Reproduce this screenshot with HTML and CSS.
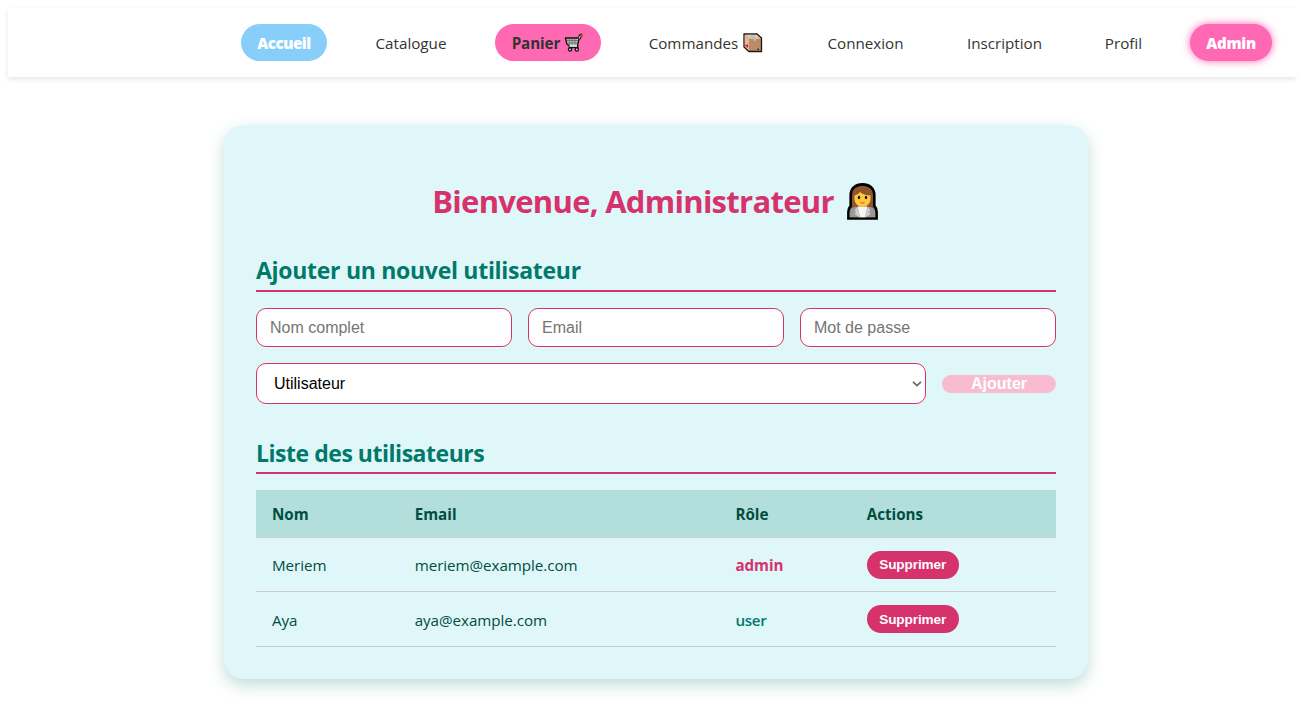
FILE: index.html
```html
<!DOCTYPE html>
<html lang="fr">
<head>
<meta charset="utf-8">
<title>Administration</title>
<link rel="stylesheet" href="styles.css">
</head>
<body>
<nav class="navbar">
  <a class="link home"><span>Accueil</span></a>
  <a class="link catalog"><span>Catalogue</span></a>
  <a class="link cart"><span>Panier</span>
    <svg class="icon-cart" width="20" height="20" viewBox="0 0 20 20">
      <path d="M15 6L16.500 2.300h1.800" fill="none" stroke="#111" stroke-width="3.200" stroke-linejoin="round"/>
      <path d="M1.500 5h13.700l-1.700 7.500 .5 2H5.500L5 12.500 2.800 11z" fill="#bdbdbd" stroke="#111" stroke-width="1.400" stroke-linejoin="round"/>
      <path d="M3 7.500h11M3.500 10h10M5.500 6v5.500M8.200 6v5.500M11 6v5.500" stroke="#666" stroke-width=".8"/>
      <path d="M5.500 13h7.500" stroke="#e0e0e0" stroke-width="1.600"/>
      <circle cx="6" cy="16.500" r="1.600" fill="#ddd" stroke="#111" stroke-width="1.300"/>
      <circle cx="12.800" cy="16.500" r="1.600" fill="#ddd" stroke="#111" stroke-width="1.300"/>
      <path d="M15 5.500L16.400 2.800" stroke="#ccc" stroke-width="1.200"/>
      <path d="M16.300 2.500h2" stroke="#f7630c" stroke-width="1.800"/>
    </svg></a>
  <a class="link orders"><span>Commandes</span>
    <svg class="icon-box" width="20" height="20" viewBox="0 0 20 20">
      <path d="M1 1h13l4.500 4v13.500H6L1 14z" fill="#b98d65" stroke="#1c1715" stroke-width="1.300"/>
      <path d="M1.700 1.700h12l4 4H6z" fill="#e8c4a7"/>
      <path d="M1.700 2L6 6v11.500l-4.300-4z" fill="#dfb99d"/>
      <path d="M6 1.700h3l4 4v2h-2.500v-2z" fill="#b8bdc5"/>
      <path d="M2.300 12l2.500 2M4.500 11.500v3" stroke="#e81224" stroke-width="1.200"/>
      <path d="M13.500 17l2.500-2v2z" fill="#3b2e25"/>
    </svg></a>
  <a class="link login"><span>Connexion</span></a>
  <a class="link signup"><span>Inscription</span></a>
  <a class="link profile"><span>Profil</span></a>
  <a class="link admin"><span>Admin</span></a>
</nav>
<main class="card">
  <h1 class="title"><span>Bienvenue, Administrateur</span>
    <svg class="icon-woman" width="31" height="37" viewBox="0 0 31 37">
      <path d="M1.400 35.500V29c0-2.500.8-4.500 2.300-6V12.500C3.700 5.500 8.500 1.400 15.500 1.400S27.300 5.500 27.300 12.500V23c1.500 1.500 2.300 3.500 2.300 6v6.500z" fill="#8e562e" stroke="#000" stroke-width="2.600"/>
      <path d="M2.700 34.200V30c0-3.800 2.300-6 6-6h13.600c3.700 0 6 2.200 6 6v4.200z" fill="#999"/>
      <path d="M10.500 23.500h10L18 34.200h-5z" fill="#f5f5f5"/>
      <path d="M10 24l-2.500 3.500 1.500 1.500-1.500 2 4.500 3.200h1.500zM21 24l2.500 3.500L22 29l1.500 2-4.500 3.200h-1.500z" fill="#ccc"/>
      <path d="M7.500 12.500c3-.8 4.500-2 5.500-3.500 2.500 2.300 6 3.200 10.500 3.500V16c0 4.500-3.500 7.800-8 7.800s-8-3.300-8-7.800z" fill="#ffc83d"/>
      <ellipse cx="12" cy="14.500" rx="1.200" ry="1.700" fill="#111"/>
      <ellipse cx="19" cy="14.500" rx="1.200" ry="1.700" fill="#111"/>
      <path d="M13.300 19.300q2.200 1.700 4.400 0" fill="none" stroke="#e8743b" stroke-width="1.200"/>
    </svg></h1>
  <h2 class="heading heading-add"><span>Ajouter un nouvel utilisateur</span></h2>
  <form class="form">
    <div class="fields">
      <input class="field" placeholder="Nom complet">
      <input class="field" placeholder="Email">
      <input class="field" placeholder="Mot de passe">
    </div>
    <div class="actions">
      <div class="select"><span>Utilisateur</span>
        <svg width="10" height="6" viewBox="0 0 10 6"><path d="M1 .8l4 3.700L9 .8" fill="none" stroke="#666" stroke-width="1.700"/></svg>
      </div>
      <button class="add" type="button">Ajouter</button>
    </div>
  </form>
  <h2 class="heading heading-list"><span>Liste des utilisateurs</span></h2>
  <table class="users">
    <thead><tr><th class="c-name">Nom</th><th class="c-mail">Email</th><th class="c-role">Rôle</th><th>Actions</th></tr></thead>
    <tbody>
      <tr class="row-first"><td>Meriem</td><td>meriem@example.com</td><td><b class="role-admin">admin</b></td><td class="c-action"><button class="delete" type="button">Supprimer</button></td></tr>
      <tr><td>Aya</td><td>aya@example.com</td><td><b class="role-user">user</b></td><td class="c-action"><button class="delete" type="button">Supprimer</button></td></tr>
    </tbody>
  </table>
</main>
</body>
</html>
```
FILE: styles.css
```css
* { box-sizing: border-box; }
html { height: 100%; overflow: hidden; }
body { min-height: 719px; margin: 0; padding: 8px 0 0 8px; background: #fff; font-family: "Open Sans", "Noto Sans", sans-serif; font-size: 15.2px; color: #004d40; }
.navbar { display: flex; gap: 32px; height: 69px; padding: 16px 25px 16px 233px; box-shadow: 0 2px 5px rgba(0,0,0,.1); }
.link { display: flex; align-items: center; justify-content: center; flex: none; height: 37px; border-radius: 20px; color: #333; line-height: 21px; white-space: nowrap; padding-top: 1px; }
.home { width: 86px; background: #87cefa; color: #fff; font-weight: 800; letter-spacing: -.5px; }
.catalog { width: 104px; }
.cart { width: 106px; background: #ff69b4; font-weight: 700; gap: 4px; letter-spacing: -.1px; }
.orders { width: 146px; gap: 5px; }
.login { width: 109px; margin-right: -1px; }
.signup { width: 107px; margin-right: -1px; }
.profile { width: 69px; }
.admin { width: 82px; background: #ff69b4; color: #fff; font-weight: 800; letter-spacing: -.3px; box-shadow: 0 0 8px #ff69b4; }
.card { width: 864px; height: 554px; margin: 48px 0 0 216px; padding: 32px; border-radius: 20px; background: #e0f7fa; box-shadow: 0 6px 16px rgba(0,121,107,.25); }
.title { display: flex; justify-content: center; align-items: center; gap: 13px; height: 43px; margin: 23px 0 30px; padding-right: 2px; font-size: 31px; line-height: 43px; letter-spacing: -.72px; color: #d6336c; white-space: nowrap; }
.heading { height: 39px; margin: 0 0 16px; border-bottom: 2px solid #d6336c; font-size: 23px; line-height: 34px; letter-spacing: -.29px; color: #00796b; white-space: nowrap; }
.heading-list { line-height: 36px; letter-spacing: -.47px; }
.form { margin: 0 0 31px; }
.fields { display: grid; grid-template-columns: repeat(3, 1fr); gap: 16px; }
.field { width: 100%; height: 39px; padding: 0 13px; border: 1px solid #d6336c; border-radius: 10px; background: #fff; font: 16px "Liberation Sans", sans-serif; }
.field::placeholder { color: #757575; }
.actions { display: flex; align-items: center; gap: 16px; margin-top: 16px; }
.select { display: flex; align-items: center; justify-content: space-between; flex: 1; height: 41px; padding: 0 3px 0 17px; border: 1px solid #d6336c; border-radius: 10px; background: #fff; color: #000; font: 16px "Liberation Sans", sans-serif; }
.add { width: 114px; height: 18px; padding: 0; border: 0; border-radius: 10px; background: #f8bbd0; color: #fff; font: bold 16px/18px "Liberation Sans", sans-serif; }
.users { width: 800px; table-layout: fixed; border-collapse: separate; border-spacing: 0; }
.users th, .users td { height: 55px; padding: 2px 16px 0; border-bottom: 1px solid #ccc; text-align: left; vertical-align: middle; line-height: 21px; }
.users th { height: 48px; background: #b2dfdb; }
.users td { letter-spacing: -.06px; }
.users .row-first td { height: 54px; }
.users .c-action { padding-top: 0; }
.c-name { width: 142.7px; }
.c-mail { width: 320.7px; }
.c-role { width: 131.3px; }
.role-admin { color: #d6336c; }
.role-user { color: #00796b; font-weight: 600; letter-spacing: -.3px; }
.delete { display: block; width: 92px; height: 28px; padding: 0; border: 0; border-radius: 14px; background: #d6336c; color: #fff; font: bold 13.6px "Liberation Sans", sans-serif; letter-spacing: -.12px; }
```
